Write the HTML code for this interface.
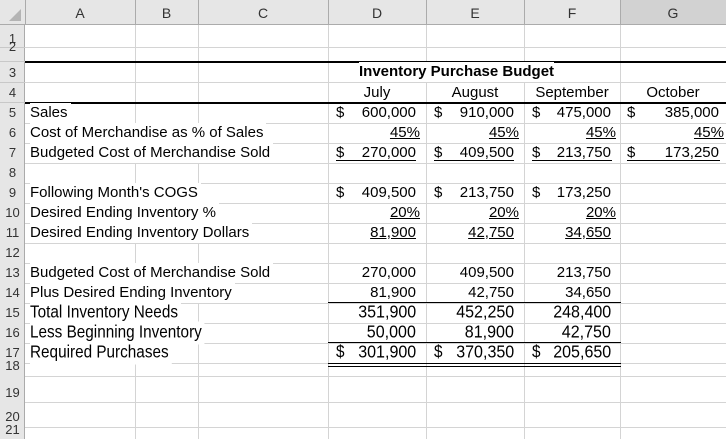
<!DOCTYPE html>
<html><head><style>
body{margin:0;width:726px;height:439px;overflow:hidden;background:#fff;font-family:"Liberation Sans",Arial,sans-serif;font-size:15px;color:#000;position:relative}
div{position:absolute;white-space:nowrap}
.h{height:1px;left:25px;width:701px;background:#d4d4d4}
.v{width:1px;top:25px;height:414px;background:#d4d4d4}
.k{background:#000}
.rn{left:0;width:25px;text-align:center;font-size:13px;color:#333;line-height:20px;height:20px}
.t{line-height:20px;height:20px}
.c{transform:scale(1.02,1.15);transform-origin:0 50%}
.cr{transform:scale(1.07,1.15);transform-origin:100% 50%}
.l{left:30px;background:#fff;padding-right:3px}
.u{text-decoration:underline}
</style></head><body>
<div style="left:0;top:0;width:726px;height:25px;background:#e6e6e6;border-bottom:1px solid #ababab;box-sizing:border-box"></div>
<div style="left:620px;top:0;width:106px;height:25px;background:#d2d2d2;border-bottom:1px solid #ababab;box-sizing:border-box"></div>
<div style="left:0;top:25px;width:25px;height:414px;background:#e6e6e6;border-right:1px solid #ababab;box-sizing:border-box"></div>
<div style="left:9px;top:9px;width:0;height:0;border-left:12px solid transparent;border-bottom:12px solid #b4b4b4"></div>
<div style="left:25px;top:0;width:1px;height:25px;background:#ababab"></div>
<div style="left:135px;top:0;width:1px;height:25px;background:#ababab"></div>
<div style="left:198px;top:0;width:1px;height:25px;background:#ababab"></div>
<div style="left:328px;top:0;width:1px;height:25px;background:#ababab"></div>
<div style="left:426px;top:0;width:1px;height:25px;background:#ababab"></div>
<div style="left:524px;top:0;width:1px;height:25px;background:#ababab"></div>
<div style="left:620px;top:0;width:1px;height:25px;background:#ababab"></div>
<div class="t" style="left:25px;width:110px;top:3px;text-align:center;font-size:14px;color:#333">A</div>
<div class="t" style="left:135px;width:63px;top:3px;text-align:center;font-size:14px;color:#333">B</div>
<div class="t" style="left:198px;width:130px;top:3px;text-align:center;font-size:14px;color:#333">C</div>
<div class="t" style="left:328px;width:98px;top:3px;text-align:center;font-size:14px;color:#333">D</div>
<div class="t" style="left:426px;width:98px;top:3px;text-align:center;font-size:14px;color:#333">E</div>
<div class="t" style="left:524px;width:96px;top:3px;text-align:center;font-size:14px;color:#333">F</div>
<div class="t" style="left:620px;width:106px;top:3px;text-align:center;font-size:14px;color:#333">G</div>
<div class="v" style="left:135px"></div><div class="v" style="left:198px"></div><div class="v" style="left:328px"></div>
<div class="v" style="left:426px"></div><div class="v" style="left:524px"></div><div class="v" style="left:620px"></div>
<div class="h" style="top:47px"></div><div class="h" style="top:82px"></div>
<div class="h" style="top:123px"></div><div class="h" style="top:143px"></div><div class="h" style="top:163px"></div>
<div class="h" style="top:183px"></div><div class="h" style="top:203px"></div><div class="h" style="top:223px"></div>
<div class="h" style="top:243px"></div><div class="h" style="top:263px"></div><div class="h" style="top:283px"></div>
<div class="h" style="top:323px"></div><div class="h" style="top:376px"></div><div class="h" style="top:402px"></div><div class="h" style="top:427px"></div>
<div class="h" style="top:303px"></div><div class="h" style="top:343px"></div><div class="h" style="top:363px"></div>
<div style="left:0;top:47px;width:25px;height:1px;background:#c8c8c8"></div>
<div style="left:0;top:61px;width:25px;height:1px;background:#c8c8c8"></div>
<div style="left:0;top:82px;width:25px;height:1px;background:#c8c8c8"></div>
<div style="left:0;top:102px;width:25px;height:1px;background:#c8c8c8"></div>
<div class="k" style="left:25px;top:61px;width:701px;height:2px"></div>
<div class="k" style="left:25px;top:102px;width:701px;height:2px"></div>
<div class="rn" style="top:29px">1</div>
<div class="rn" style="top:41px;height:12px;line-height:12px;overflow:hidden">2</div>
<div class="rn" style="top:63px">3</div>
<div class="rn" style="top:83px">4</div>
<div class="rn" style="top:103px">5</div><div class="rn" style="top:123px">6</div><div class="rn" style="top:143px">7</div>
<div class="rn" style="top:163px">8</div><div class="rn" style="top:183px">9</div><div class="rn" style="top:203px">10</div>
<div class="rn" style="top:223px">11</div><div class="rn" style="top:243px">12</div><div class="rn" style="top:263px">13</div>
<div class="rn" style="top:283px">14</div><div class="rn" style="top:303px">15</div><div class="rn" style="top:323px">16</div>
<div class="rn" style="top:343px">17</div>
<div class="rn" style="top:360px;height:12px;line-height:12px;overflow:hidden">18</div>
<div class="rn" style="top:383px">19</div>
<div class="rn" style="top:407px">20</div>
<div class="rn" style="top:423px;height:14px;line-height:14px;overflow:hidden">21</div>
<div class="t" style="left:359px;top:62px;font-weight:bold;background:#fff">Inventory Purchase Budget</div>
<div class="t" style="left:328px;width:98px;top:83px;text-align:center">July</div>
<div class="t" style="left:426px;width:98px;top:83px;text-align:center">August</div>
<div class="t" style="left:524px;width:96px;top:83px;text-align:center">September</div>
<div class="t" style="left:620px;width:106px;top:83px;text-align:center">October</div>
<div class="t l" style="top:103px">Sales</div>
<div class="t l" style="top:123px">Cost of Merchandise as % of Sales</div>
<div class="t l" style="top:143px">Budgeted Cost of Merchandise Sold</div>
<div class="t l" style="top:183px">Following Month's COGS</div>
<div class="t l" style="top:203px">Desired Ending Inventory %</div>
<div class="t l" style="top:223px">Desired Ending Inventory Dollars</div>
<div class="t l" style="top:263px">Budgeted Cost of Merchandise Sold</div>
<div class="t l" style="top:283px">Plus Desired Ending Inventory</div>
<div class="t l c" style="top:303px">Total Inventory Needs</div>
<div class="t l c" style="top:323px">Less Beginning Inventory</div>
<div class="t l c" style="top:343px">Required Purchases</div>
<div class="t" style="left:336px;top:103px">$</div><div class="t" style="right:310px;top:103px">600,000</div>
<div class="t" style="left:434px;top:103px">$</div><div class="t" style="right:212px;top:103px">910,000</div>
<div class="t" style="left:532px;top:103px">$</div><div class="t" style="right:115px;top:103px">475,000</div>
<div class="t" style="left:627px;top:103px">$</div><div class="t" style="right:7px;top:103px">385,000</div>
<div class="t u" style="right:306px;top:123px">45%</div>
<div class="t u" style="right:207px;top:123px">45%</div>
<div class="t u" style="right:110px;top:123px">45%</div>
<div class="t u" style="right:2px;top:123px">45%</div>
<div class="k" style="left:336px;top:160px;width:80px;height:1px"></div>
<div class="k" style="left:434px;top:160px;width:80px;height:1px"></div>
<div class="k" style="left:532px;top:160px;width:80px;height:1px"></div>
<div class="k" style="left:627px;top:160px;width:93px;height:1px"></div>
<div class="t" style="left:336px;top:143px">$</div><div class="t" style="right:310px;top:143px">270,000</div>
<div class="t" style="left:434px;top:143px">$</div><div class="t" style="right:212px;top:143px">409,500</div>
<div class="t" style="left:532px;top:143px">$</div><div class="t" style="right:115px;top:143px">213,750</div>
<div class="t" style="left:627px;top:143px">$</div><div class="t" style="right:7px;top:143px">173,250</div>
<div class="t" style="left:336px;top:183px">$</div><div class="t" style="right:310px;top:183px">409,500</div>
<div class="t" style="left:434px;top:183px">$</div><div class="t" style="right:212px;top:183px">213,750</div>
<div class="t" style="left:532px;top:183px">$</div><div class="t" style="right:115px;top:183px">173,250</div>
<div class="t u" style="right:306px;top:203px">20%</div>
<div class="t u" style="right:207px;top:203px">20%</div>
<div class="t u" style="right:110px;top:203px">20%</div>
<div class="t u" style="right:310px;top:223px">81,900</div>
<div class="t u" style="right:212px;top:223px">42,750</div>
<div class="t u" style="right:115px;top:223px">34,650</div>
<div class="t" style="right:310px;top:263px">270,000</div>
<div class="t" style="right:212px;top:263px">409,500</div>
<div class="t" style="right:115px;top:263px">213,750</div>
<div class="t" style="right:310px;top:283px">81,900</div>
<div class="t" style="right:212px;top:283px">42,750</div>
<div class="t" style="right:115px;top:283px">34,650</div>
<div class="t cr" style="right:310px;top:303px">351,900</div>
<div class="t cr" style="right:212px;top:303px">452,250</div>
<div class="t cr" style="right:115px;top:303px">248,400</div>
<div class="t cr" style="right:310px;top:323px">50,000</div>
<div class="t cr" style="right:212px;top:323px">81,900</div>
<div class="t cr" style="right:115px;top:323px">42,750</div>
<div class="t c" style="left:336px;top:343px">$</div><div class="t cr" style="right:310px;top:343px">301,900</div>
<div class="t c" style="left:434px;top:343px">$</div><div class="t cr" style="right:212px;top:343px">370,350</div>
<div class="t c" style="left:532px;top:343px">$</div><div class="t cr" style="right:115px;top:343px">205,650</div>
<div class="k" style="left:328px;top:302px;width:293px;height:1px"></div>
<div class="k" style="left:328px;top:342px;width:293px;height:1px"></div>
<div class="k" style="left:328px;top:363px;width:293px;height:1px"></div>
<div class="k" style="left:328px;top:366px;width:293px;height:1px"></div>
</body></html>
